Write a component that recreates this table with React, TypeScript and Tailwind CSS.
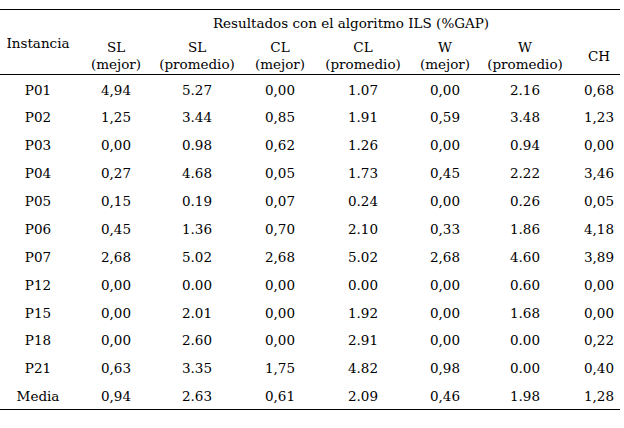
import React from "react";

const rows: string[][] = [
  ["P01", "4,94", "5.27", "0,00", "1.07", "0,00", "2.16", "0,68"],
  ["P02", "1,25", "3.44", "0,85", "1.91", "0,59", "3.48", "1,23"],
  ["P03", "0,00", "0.98", "0,62", "1.26", "0,00", "0.94", "0,00"],
  ["P04", "0,27", "4.68", "0,05", "1.73", "0,45", "2.22", "3,46"],
  ["P05", "0,15", "0.19", "0,07", "0.24", "0,00", "0.26", "0,05"],
  ["P06", "0,45", "1.36", "0,70", "2.10", "0,33", "1.86", "4,18"],
  ["P07", "2,68", "5.02", "2,68", "5.02", "2,68", "4.60", "3,89"],
  ["P12", "0,00", "0.00", "0,00", "0.00", "0,00", "0.60", "0,00"],
  ["P15", "0,00", "2.01", "0,00", "1.92", "0,00", "1.68", "0,00"],
  ["P18", "0,00", "2.60", "0,00", "2.91", "0,00", "0.00", "0,22"],
  ["P21", "0,63", "3.35", "1,75", "4.82", "0,98", "0.00", "0,40"],
  ["Media", "0,94", "2.63", "0,61", "2.09", "0,46", "1.98", "1,28"],
];

const sub: [string, string][] = [
  ["SL", "(mejor)"],
  ["SL", "(promedio)"],
  ["CL", "(mejor)"],
  ["CL", "(promedio)"],
  ["W", "(mejor)"],
  ["W", "(promedio)"],
];

export default function App() {
  return (
    <div className="w-[624px] h-[428px] bg-white pt-[9px] text-black font-['DejaVu_Serif',serif] text-[13.5px]">
      <table className="w-[620px] border-collapse table-fixed">
        <colgroup>
          <col className="w-[76px]" />
          <col className="w-[80px]" />
          <col className="w-[82px]" />
          <col className="w-[84px]" />
          <col className="w-[82px]" />
          <col className="w-[82px]" />
          <col className="w-[78px]" />
          <col className="w-[56px]" />
        </colgroup>
        <thead>
          <tr className="border-t border-black">
            <th rowSpan={2} className="font-normal text-center align-middle pt-[3px] border-b border-black">
              Instancia
            </th>
            <th colSpan={7} className="font-normal text-center h-[28px] align-middle pl-[6px] leading-[17px]">
              Resultados con el algoritmo ILS (%GAP)
            </th>
          </tr>
          <tr className="border-b border-black">
            {sub.map(([a, b], i) => (
              <th key={i} className="font-normal text-center h-[37px] align-middle leading-[17px]">
                <div>{a}</div>
                <div>{b}</div>
              </th>
            ))}
            <th className="font-normal text-center align-middle pl-[14px] pt-[1px] leading-[17px]">CH</th>
          </tr>
        </thead>
        <tbody>
          {rows.map((r, i) => (
            <tr key={i} className={i === rows.length - 1 ? "border-b border-black" : ""}>
              {r.map((c, j) => (
                <td
                  key={j}
                  className={
                    j === 7
                      ? "text-center align-middle h-[27.9px] pl-[14px] pt-[3px] leading-[17px]"
                      : "text-center align-middle h-[27.9px] pt-[3px] leading-[17px]"
                  }
                >
                  {c}
                </td>
              ))}
            </tr>
          ))}
        </tbody>
      </table>
    </div>
  );
}
